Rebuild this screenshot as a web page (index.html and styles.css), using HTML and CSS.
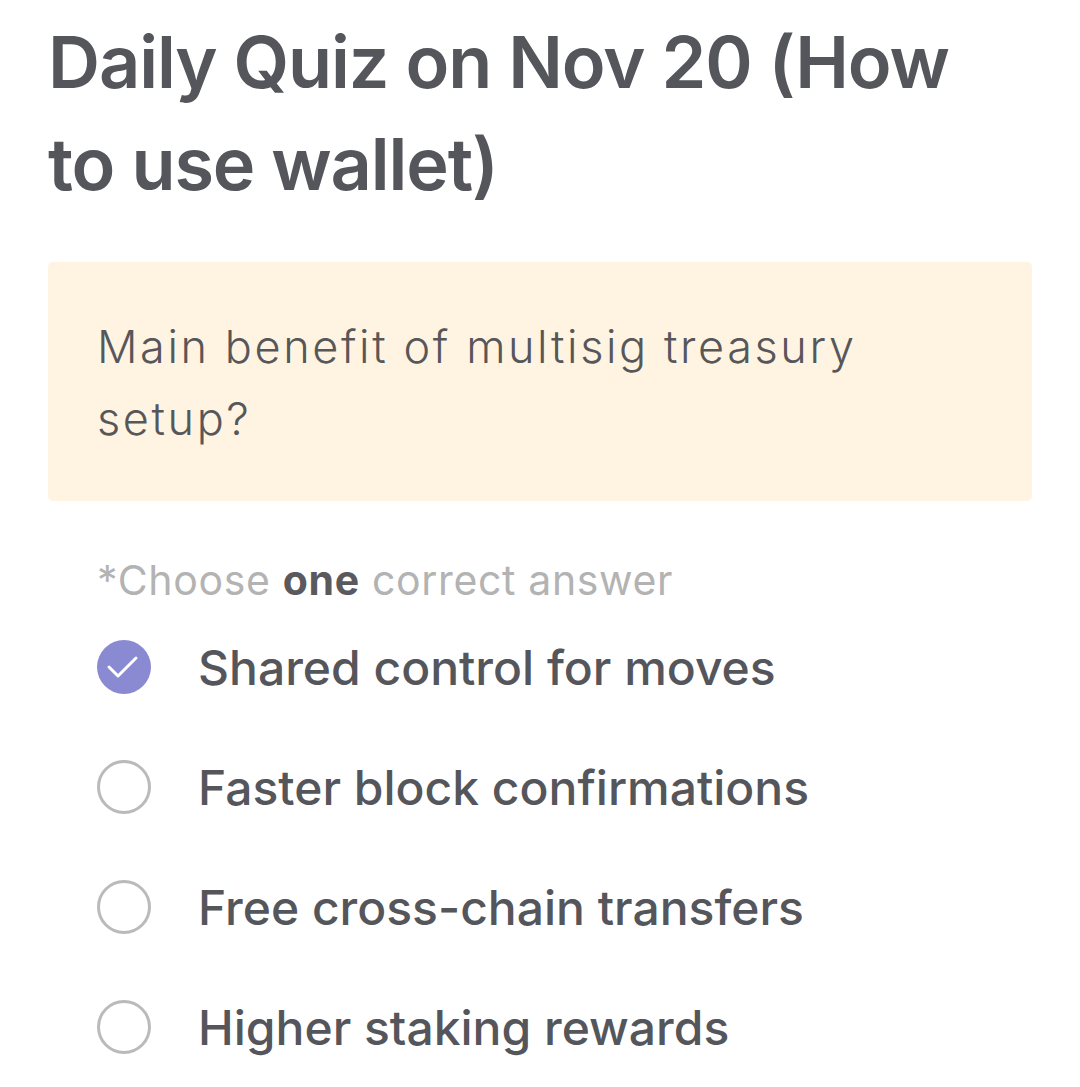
FILE: index.html
```html
<!DOCTYPE html>
<html>
<head>
<meta charset="utf-8">
<link rel="stylesheet" href="styles.css">
</head>
<body>
<div class="page">
  <h1 class="title">Daily Quiz on Nov 20 (How to use wallet)</h1>
  <div class="question">Main benefit of multisig treasury setup?</div>
  <div class="hint">*Choose <b>one</b> correct answer</div>
  <ul class="options">
    <li class="option">
      <span class="radio checked">
        <svg width="54" height="54" viewBox="0 0 54 54"><path d="M12 27 L21 36 L39 18" fill="none" stroke="#fff" stroke-width="3" stroke-linecap="round" stroke-linejoin="round"/></svg>
      </span>
      <span class="label">Shared control for moves</span>
    </li>
    <li class="option">
      <span class="radio"></span>
      <span class="label">Faster block confirmations</span>
    </li>
    <li class="option">
      <span class="radio"></span>
      <span class="label">Free cross-chain transfers</span>
    </li>
    <li class="option">
      <span class="radio"></span>
      <span class="label">Higher staking rewards</span>
    </li>
  </ul>
</div>
</body>
</html>
```

FILE: styles.css
```css
html, body {
  margin: 0;
  padding: 0;
  background: #ffffff;
}
body {
  font-family: Inter, "Noto Sans", sans-serif;
  color: #55565b;
}
.page {
  padding: 11px 48px 0 48px;
}
.title {
  margin: 0;
  font-size: 72px;
  line-height: 102px;
  font-weight: 600;
  letter-spacing: -1.1px;
  color: #55565b;
  max-width: 940px;
}
.question {
  margin-top: 47px;
  background: #fff4e2;
  border-radius: 5px;
  padding: 49px 48px 46px 49px;
  font-size: 45px;
  line-height: 72px;
  font-weight: 300;
  letter-spacing: 2.6px;
  color: #57575a;
}
.hint {
  margin-top: 54px;
  padding-left: 49px;
  font-size: 41px;
  line-height: 50px;
  letter-spacing: 0.65px;
  color: #b3b3b3;
}
.hint b {
  font-weight: 700;
  color: #5a5a5e;
}
.options {
  list-style: none;
  margin: 2px 0 0 0;
  padding: 0 0 0 49px;
}
.option {
  height: 120px;
  display: flex;
  align-items: center;
  gap: 47px;
}
.radio {
  width: 54px;
  height: 54px;
  box-sizing: border-box;
  border-radius: 50%;
  border: 3px solid #bababa;
  flex: none;
  display: flex;
}
.radio.checked {
  border: none;
  background: #8a8ad2;
}
.label {
  font-size: 48px;
  font-weight: 500;
  color: #55565b;
}
```
